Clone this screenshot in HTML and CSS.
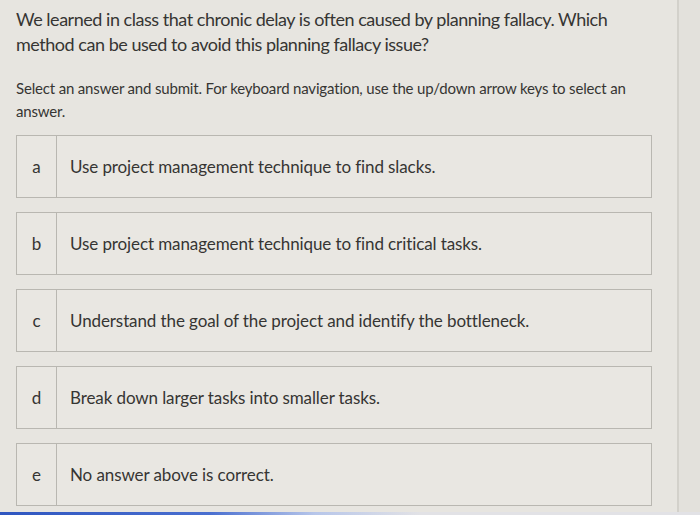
FILE: index.html
```html
<!DOCTYPE html>
<html>
<head>
<meta charset="utf-8">
<link rel="stylesheet" href="styles.css">
</head>
<body>
<div class="page">
  <main class="content">
    <p class="question">We learned in class that chronic delay is often caused by planning fallacy. Which method can be used to avoid this planning fallacy issue?</p>
    <p class="hint">Select an answer and submit. For keyboard navigation, use the up/down arrow keys to select an answer.</p>
    <ul class="answers">
      <li class="answer"><span class="letter">a</span><span class="text">Use project management technique to find slacks.</span></li>
      <li class="answer"><span class="letter">b</span><span class="text">Use project management technique to find critical tasks.</span></li>
      <li class="answer"><span class="letter">c</span><span class="text">Understand the goal of the project and identify the bottleneck.</span></li>
      <li class="answer"><span class="letter">d</span><span class="text">Break down larger tasks into smaller tasks.</span></li>
      <li class="answer"><span class="letter">e</span><span class="text">No answer above is correct.</span></li>
    </ul>
  </main>
  <aside class="strip"></aside>
</div>
<div class="taskbar"></div>
</body>
</html>
```

FILE: styles.css
```css
html, body {
  margin: 0;
  padding: 0;
  height: 515px;
  overflow: hidden;
  background: #e7e5e0;
}
body {
  font-family: Lato, "Open Sans", sans-serif;
  color: #363533;
}
.page {
  display: flex;
  height: 512px;
}
.content {
  width: 679px;
  border-right: 2px solid #d3d1cb;
  padding: 0 0 0 16px;
  box-sizing: border-box;
}
.strip {
  flex: 1;
  background: #e3e1dc;
}
.question {
  margin: 7px 0 0;
  font-size: 18px;
  line-height: 25px;
  letter-spacing: -0.47px;
  width: 630px;
}
.hint {
  margin: 20px 0 0;
  font-size: 15px;
  line-height: 23px;
  letter-spacing: -0.17px;
  width: 630px;
}
.answers {
  list-style: none;
  margin: 12px 0 0;
  padding: 0;
  display: flex;
  flex-direction: column;
  gap: 14px;
  width: 636px;
}
.answer {
  display: flex;
  height: 63px;
  border: 1px solid #b9b7b1;
  box-sizing: border-box;
  background: #e9e7e2;
}
.letter {
  width: 39px;
  border-right: 1px solid #b9b7b1;
  display: flex;
  align-items: center;
  justify-content: center;
  font-size: 17px;
}
.text {
  display: flex;
  align-items: center;
  padding-left: 13px;
  font-size: 17px;
  letter-spacing: -0.1px;
}
.taskbar {
  height: 3px;
  background: linear-gradient(90deg, #2f56c0 0%, #4a6fd0 30%, #b7c6ea 45%, #e2e2e6 60%);
}
```
